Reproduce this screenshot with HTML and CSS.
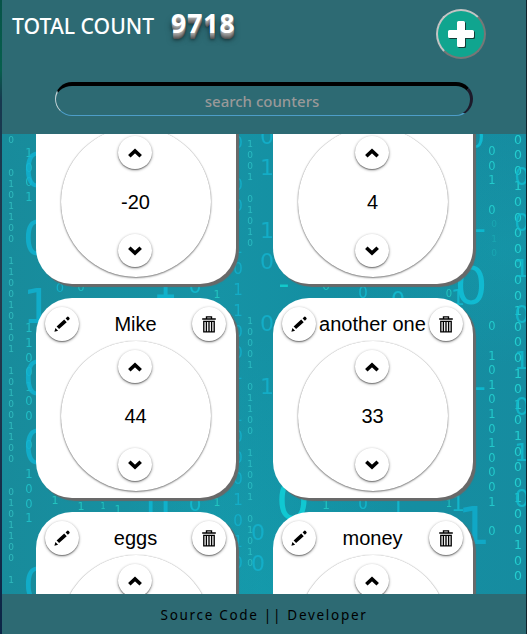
FILE: index.html
```html
<!DOCTYPE html>
<html lang="en">
<head>
<meta charset="utf-8">
<title>Counters</title>
<link rel="stylesheet" href="styles.css">
</head>
<body>
<svg class="defs" aria-hidden="true">
  <symbol id="pencil" viewBox="0 0 16 16"><path d="M.4 15.700l1-3.700 2.700 2.700zM2.600 10.500 10.200 3.600 12.700 6.200 5.100 13.100zM11.600 2.400l1.400-1.400q.9-.8 1.700.1l.6.7q.8.9-.1 1.700l-1.300 1.300z"/></symbol>
  <symbol id="trash" viewBox="0 0 14 17"><path d="M4.500 2.500V.8h5v1.700M.2 3h13.600M1.800 5.400h10.400v10.400H1.800zM4.400 5.400v10.400M7 5.400v10.400M9.600 5.400v10.400" fill="none" stroke="#000" stroke-width="1.35"/></symbol>
  <symbol id="up" viewBox="0 0 14 10"><path d="M1.300 8.200 7 2.900l5.700 5.300" fill="none" stroke="#000" stroke-width="3.600"/></symbol>
  <symbol id="down" viewBox="0 0 14 10"><path d="M1.300 1.800 7 7.100l5.700-5.300" fill="none" stroke="#000" stroke-width="3.600"/></symbol>
</svg>
<div class="app">
  <header class="header">
    <div class="top">
      <h1 class="total">TOTAL COUNT</h1>
      <span class="sum">9718</span>
      <button class="add" aria-label="Add"><svg width="28" height="28" viewBox="0 0 28 28"><path d="M11.500 1h5q1.500 0 1.500 1.500V10h7.500Q27 10 27 11.500v5q0 1.500-1.500 1.500H18v7.500q0 1.500-1.500 1.500h-5Q10 27 10 25.500V18H2.500Q1 18 1 16.500v-5Q1 10 2.500 10H10V2.500Q10 1 11.500 1z" fill="#fff"/></svg></button>
    </div>
    <input class="search" placeholder="search counters">
  </header>
  <main class="main">
    <svg class="rain" width="524" height="460" viewBox="2 134 524 460" aria-hidden="true"></svg>
    <div class="grid"></div>
  </main>
  <footer class="footer">Source Code || Developer</footer>
</div>
<script src="script.js"></script>
</body>
</html>
```
FILE: styles.css
```css
* { box-sizing: border-box; }
body {
  margin: 0;
  height: 634px;
  overflow: hidden;
  padding: 0 1px 0 2px;
  background: linear-gradient(#075348 0, #06604d 70px, #17384f 100px, #26394b 300px, #0b2547 634px);
  font-family: "Liberation Sans", Arial, sans-serif;
}
.defs { display: none; }
.app { height: 634px; display: flex; flex-direction: column; box-shadow: 1px 0 #10222b; }
.header {
  height: 134px;
  flex: none;
  background: #2d6a73;
  font-family: "Noto Sans", sans-serif;
}
.top { display: flex; height: 82px; padding: 9px 40px 0 10px; }
.total {
  margin: 0;
  width: 159px;
  color: #fff;
  font-size: 21.2px;
  line-height: 33px;
  font-weight: 500;
  white-space: nowrap;
}
.sum {
  color: #fff;
  font-size: 26.5px;
  letter-spacing: 1px;
  line-height: 29px;
  font-weight: 700;
  text-shadow: 0 1px #a5a5a5, 0 2px #959595, 0 3px #858585, 0 4px #757575, 0 5px #656565, 0 6px #555, 0 7px 3px rgba(0,0,0,.35), 0 6px 6px rgba(0,0,0,.5);
}
.add {
  width: 50px;
  height: 50px;
  margin-left: auto;
  padding: 0;
  display: grid;
  place-items: center;
  border: 2px solid;
  border-color: #c4c4c4 #777 #777 #c4c4c4;
  border-radius: 50%;
  background: #10a58f;
}
.add svg { filter: drop-shadow(1px 1px 0 #123c36); }
.search {
  display: block;
  width: 418px;
  height: 34px;
  margin: 0 0 0 53px;
  padding: 1px 2px 0 0;
  border: solid;
  border-width: 4px 3px 1px 1px;
  border-color: #000 #1d1b2b #4d9dc8 #c4d3d7;
  border-radius: 17px;
  outline: none;
  background: transparent;
  color: #fff;
  font: 500 15px "Noto Sans", sans-serif;
  text-align: center;
}
.search::placeholder { color: #999; opacity: 1; }
.main {
  position: relative;
  height: 460px;
  flex: none;
  overflow: hidden;
  background:
    radial-gradient(ellipse at 96% 25%, rgba(18,177,190,.2), transparent 24%),
    radial-gradient(ellipse at 50% 100%, rgba(18,185,199,.2), transparent 40%),
    linear-gradient(90deg, #188b9b, #1693a5 40%, #148fa2 60%, #168ca0);
}
.rain { position: absolute; inset: 0; font-family: "DejaVu Sans", sans-serif; }
.grid {
  position: relative;
  display: grid;
  grid-template-columns: 200px 200px;
  gap: 14px 37px;
  margin: -50px 0 0 34px;
}
.card {
  height: 200px;
  padding: 9px 10px;
  border-radius: 36px;
  background: #fff;
  box-shadow: 3px 3px 1px #696969;
}
.card-head { display: flex; justify-content: space-between; align-items: center; height: 34px; margin-left: -1px; }
.name { flex: 1; text-align: center; font-size: 20px; white-space: nowrap; }
.round {
  width: 34px;
  height: 34px;
  flex: none;
  padding: 0;
  display: grid;
  place-items: center;
  border: 0;
  border-radius: 50%;
  background: #fff;
  box-shadow: 0 1px 3px rgba(0,0,0,.45), 0 1px 1px rgba(0,0,0,.3);
}
.dial {
  width: 150px;
  height: 150px;
  margin: 0 0 0 15px;
  padding: 9px 0 10px;
  display: flex;
  flex-direction: column;
  align-items: center;
  justify-content: space-between;
  border-radius: 50%;
  box-shadow: 0 1px 2px rgba(0,0,0,.5), 0 0 1px rgba(0,0,0,.3);
}
.dial .round { height: 33px; margin-right: 2px; }
.value { font-size: 20px; margin-right: 1px; padding-top: 2px; }
.footer {
  height: 40px;
  flex: none;
  background: #2d6a73;
  color: #000;
  font: 13.5px/42px "Noto Sans", sans-serif;
  letter-spacing: 1.7px;
  text-align: center;
}
```
FILE: script.js
```js
const counters = [
  ["milk", "-20"], ["books", "4"],
  ["Mike", "44"], ["another one", "33"],
  ["eggs", "12"], ["money", "50"]
];
const icon = (id, w, h) => `<svg width="${w}" height="${h}"><use href="#${id}"/></svg>`;
document.querySelector(".grid").innerHTML = counters.map(([name, value]) => `
  <section class="card">
    <div class="card-head">
      <button class="round">${icon("pencil", 16, 16)}</button>
      <span class="name">${name}</span>
      <button class="round">${icon("trash", 14, 17)}</button>
    </div>
    <div class="dial">
      <button class="round">${icon("up", 14, 10)}</button>
      <span class="value">${value}</span>
      <button class="round">${icon("down", 14, 10)}</button>
    </div>
  </section>`).join("");

// Falling digit columns: x, first centre y, step, font size, colour, digits
const columns = [
  [11, 140, 11, 9, "#35c5c5", "0  0101100 110010101 101001100  0101100 1"],
  [29, 153, 14.6, 11.5, "#22c9cf", "1001        1100100 0 1001"],
  [250, 144, 11, 9, "#2fc4c8", "1001 01010"],
  [250, 321, 11, 9, "#2fc4c8", "10001 01100 11001 01010"],
  [492, 151, 14.6, 11.5, "#25d9d6", "001 0       0 10101010001 0"],
  [494, 224, 14.6, 9, "#1aabb5", "010"],
  [518, 139, 15.6, 12.5, "#27dfdc", "00010000000100010101000100100"],
  [522, 176, 46, 24, "#12bdd0", "00101010"],
  [267, 136, 31.2, 22, "#13b4d0", "01 10 0 1"],
  [258, 532, 31, 22, "#13b4d0", "00"],
  [238, 143, 21, 15, "#13b3cf", "0 00 1011001 10001010"],
  [38, 170, 68, 48, "#10b4d4", "001"],
  [38, 378, 69, 48, "#10b4d4", "00 0"],
  [471, 285, 68, 52, "#10c5dd", "0"],
  [475, 136, 20, 32, "#10c5dd", "0"],
  [480, 228, 158, 34, "#0bc1d8", "--"],
  [474, 525, 56, 52, "#0fafd0", "1"],
  [60, 287, 20, 13, "#13b9d2", "0"],
  [81, 287, 10.5, 11, "#20cbcb", "0"],
  [165, 284, 222, 40, "#0fb9d5", "11"],
  [150, 504, 20, 38, "#0fb9d5", "1"],
  [195, 286, 218, 20, "#13bfd5", "00"],
  [217, 294, 208, 11, "#25d2c7", "11"],
  [55, 500, 10, 11, "#25d2c7", "1"],
  [81, 506, 10, 11, "#25d2c7", "1"],
  [103, 506, 10, 8, "#25d2c7", "1"],
  [118, 509, 10, 11, "#25d2c7", "1"],
  [363, 293, 211, 15, "#13bfd5", "00"],
  [293, 500, 10, 54, "#10d5dd", "0"],
  [326, 286, 219, 12, "#25d2c7", "01"],
  [284, 283, 218, 30, "#12d8d5", "-"],
  [398, 299, 207, 22, "#13bfd5", "01"],
  [449, 293, 210, 10, "#25d2c7", "01"],
  [458, 297, 206, 22, "#13bfd5", "11"]
];
let art = "";
for (const [x, y, step, size, color, digits] of columns) {
  [...digits].forEach((d, i) => {
    if (d !== " ") art += `<text x="${x}" y="${(y + i * step + size * .36).toFixed(1)}" font-size="${size}" fill="${color}" opacity=".8" text-anchor="middle">${d}</text>`;
  });
}
document.querySelector(".rain").innerHTML = art;
```
